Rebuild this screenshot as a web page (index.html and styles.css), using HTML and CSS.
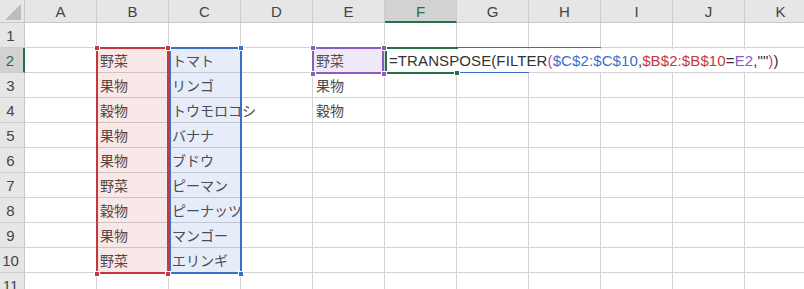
FILE: index.html
```html
<!DOCTYPE html>
<html lang="ja">
<head>
<meta charset="utf-8">
<title>Sheet</title>
<link rel="stylesheet" href="styles.css">
</head>
<body>
<div class="sheet">
  <div class="grid">
    <div class="corner"><svg class="tri" width="25" height="23" viewBox="0 0 25 23"><polygon points="21,4 21,20 5,20" fill="#bcbcbc"/></svg></div>
    <div class="ch">A</div><div class="ch">B</div><div class="ch">C</div><div class="ch">D</div><div class="ch">E</div><div class="ch ch-sel">F</div><div class="ch">G</div><div class="ch">H</div><div class="ch">I</div><div class="ch">J</div><div class="ch">K</div>

    <div class="rh">1</div><div class="c"></div><div class="c"></div><div class="c"></div><div class="c"></div><div class="c"></div><div class="c"></div><div class="c"></div><div class="c"></div><div class="c"></div><div class="c"></div><div class="c"></div>

    <div class="rh rh-sel">2</div><div class="c"></div><div class="c">野菜</div><div class="c">トマト</div><div class="c"></div><div class="c">野菜</div><div class="c"></div><div class="c"></div><div class="c"></div><div class="c"></div><div class="c"></div><div class="c"></div>

    <div class="rh">3</div><div class="c"></div><div class="c">果物</div><div class="c">リンゴ</div><div class="c"></div><div class="c">果物</div><div class="c"></div><div class="c"></div><div class="c"></div><div class="c"></div><div class="c"></div><div class="c"></div>

    <div class="rh">4</div><div class="c"></div><div class="c">穀物</div><div class="c">トウモロコシ</div><div class="c"></div><div class="c">穀物</div><div class="c"></div><div class="c"></div><div class="c"></div><div class="c"></div><div class="c"></div><div class="c"></div>

    <div class="rh">5</div><div class="c"></div><div class="c">果物</div><div class="c">バナナ</div><div class="c"></div><div class="c"></div><div class="c"></div><div class="c"></div><div class="c"></div><div class="c"></div><div class="c"></div><div class="c"></div>

    <div class="rh">6</div><div class="c"></div><div class="c">果物</div><div class="c">ブドウ</div><div class="c"></div><div class="c"></div><div class="c"></div><div class="c"></div><div class="c"></div><div class="c"></div><div class="c"></div><div class="c"></div>

    <div class="rh">7</div><div class="c"></div><div class="c">野菜</div><div class="c">ピーマン</div><div class="c"></div><div class="c"></div><div class="c"></div><div class="c"></div><div class="c"></div><div class="c"></div><div class="c"></div><div class="c"></div>

    <div class="rh">8</div><div class="c"></div><div class="c">穀物</div><div class="c">ピーナッツ</div><div class="c"></div><div class="c"></div><div class="c"></div><div class="c"></div><div class="c"></div><div class="c"></div><div class="c"></div><div class="c"></div>

    <div class="rh">9</div><div class="c"></div><div class="c">果物</div><div class="c">マンゴー</div><div class="c"></div><div class="c"></div><div class="c"></div><div class="c"></div><div class="c"></div><div class="c"></div><div class="c"></div><div class="c"></div>

    <div class="rh">10</div><div class="c"></div><div class="c">野菜</div><div class="c">エリンギ</div><div class="c"></div><div class="c"></div><div class="c"></div><div class="c"></div><div class="c"></div><div class="c"></div><div class="c"></div><div class="c"></div>

    <div class="rh">11</div><div class="c"></div><div class="c"></div><div class="c"></div><div class="c"></div><div class="c"></div><div class="c"></div><div class="c"></div><div class="c"></div><div class="c"></div><div class="c"></div><div class="c"></div>
  </div>

  <div class="rng rng-b"></div>
  <div class="rng rng-c"></div>
  <div class="rng rng-e"></div>

  <div class="editor"><span class="f-k">=TRANSPOSE(FILTER</span><span class="f-p">(</span><span class="f-c">$C$2:$C$10</span><span class="f-k">,</span><span class="f-b">$B$2:$B$10</span><span class="f-k">=</span><span class="f-e">E2</span><span class="f-k">,""</span><span class="f-p">)</span><span class="f-k">)</span><span class="caret"></span></div>
  <div class="active"></div>
  <div class="edit-top"></div>
  <div class="edit-bottom"></div>

  <div class="hdl hdl-red h1"></div>
  <div class="hdl hdl-red h2"></div>
  <div class="hdl hdl-red h3"></div>
  <div class="hdl hdl-red h4"></div>
  <div class="hdl hdl-blue h5"></div>
  <div class="hdl hdl-blue h6"></div>
  <div class="hdl hdl-purple h7"></div>
  <div class="hdl hdl-purple h8"></div>
  <div class="hdl hdl-purple h9"></div>
  <div class="hdl hdl-purple h10"></div>
  <div class="hdl hdl-green h11"></div>
</div>
</body>
</html>
```

FILE: styles.css
```css
* { box-sizing: border-box; }
html, body { margin: 0; padding: 0; background: #fff; overflow: hidden; }
body { width: 804px; height: 289px; }

.sheet {
  position: relative;
  width: 804px;
  height: 289px;
  overflow: hidden;
}

.grid {
  display: grid;
  grid-template-columns: 25px repeat(11, 72px);
  grid-template-rows: 23px repeat(11, 25px);
  width: max-content;
}

.corner {
  background: #e6e6e6;
  border-right: 1px solid #c8c8c8;
  border-bottom: 1px solid #c8c8c8;
}
.tri { display: block; }

.ch {
  background: #e6e6e6;
  border-right: 1px solid #cdcdcd;
  border-bottom: 1px solid #c8c8c8;
  font-family: "Liberation Sans", Arial, sans-serif;
  font-size: 15px;
  color: #444;
  display: flex;
  align-items: center;
  justify-content: center;
  padding-top: 1px;
}
.ch-sel {
  background: #d2d2d2;
  color: #217346;
  border-bottom: 2px solid #217346;
}

.rh {
  background: #e6e6e6;
  border-right: 1px solid #c8c8c8;
  border-bottom: 1px solid #cdcdcd;
  font-family: "Liberation Sans", Arial, sans-serif;
  font-size: 15px;
  color: #444;
  display: flex;
  align-items: center;
  justify-content: center;
  padding-right: 3px;
}
.rh-sel {
  background: #d2d2d2;
  color: #217346;
  border-right: 2px solid #217346;
}

.c {
  border-right: 1px solid #d4d4d4;
  border-bottom: 1px solid #d4d4d4;
  font-family: "Noto Sans CJK JP", sans-serif;
  font-size: 14px;
  color: #4a4a4a;
  line-height: 25px;
  padding-left: 3px;
  white-space: nowrap;
  overflow: visible;
}

/* range highlights (overlays) */
.rng {
  position: absolute;
  border: 2px solid;
  pointer-events: none;
}
.rng-b {
  left: 96px; top: 47px; width: 73px; height: 227px;
  border-color: #c4383d;
  background: rgba(200, 50, 50, 0.11);
}
.rng-c {
  left: 169px; top: 47px; width: 73px; height: 227px;
  border-color: #3a6fc8;
  background: rgba(60, 110, 200, 0.12);
}
.rng-e {
  left: 312px; top: 47px; width: 72px; height: 27px;
  border-color: #8b5cc0;
  background: rgba(140, 90, 200, 0.13);
}

.editor {
  position: absolute;
  left: 387px; top: 49px;
  width: 393px; height: 23px;
  padding-left: 2px;
  background: #fff;
  font-family: "Liberation Sans", Arial, sans-serif;
  font-size: 15px;
  letter-spacing: 0.1px;
  line-height: 23px;
  white-space: nowrap;
  display: flex;
  align-items: center;
}
.f-k { color: #333; }
.f-p { color: #c2408c; }
.f-c { color: #3a6fc8; }
.f-b { color: #c4383d; }
.f-e { color: #8b5cc0; }
.caret {
  display: inline-block;
  width: 1px;
  height: 20px;
  background: #000;
  margin-left: 2px;
}

.active {
  position: absolute;
  left: 385px; top: 47px; width: 73px; height: 27px;
  border: 2px solid #217346;
  border-right: none;
  pointer-events: none;
}
.edit-top {
  position: absolute;
  left: 458px; top: 47px; width: 143px; height: 1px;
  background: #3a6fc8;
}
.edit-bottom {
  position: absolute;
  left: 459px; top: 72px; width: 70px; height: 1px;
  background: #3a6fc8;
}

.hdl {
  position: absolute;
  width: 6px; height: 6px;
  border: 1px solid #fff;
}
.hdl-red { background: #c4383d; }
.hdl-blue { background: #3a6fc8; }
.hdl-purple { background: #8b5cc0; }
.hdl-green { background: #217346; }
.h1 { left: 94px; top: 45px; }
.h2 { left: 165px; top: 45px; }
.h3 { left: 94px; top: 271px; }
.h4 { left: 165px; top: 271px; }
.h5 { left: 238px; top: 45px; }
.h6 { left: 238px; top: 271px; }
.h7 { left: 310px; top: 45px; }
.h8 { left: 381px; top: 45px; }
.h9 { left: 310px; top: 71px; }
.h10 { left: 381px; top: 71px; }
.h11 { left: 454px; top: 70px; }
```
